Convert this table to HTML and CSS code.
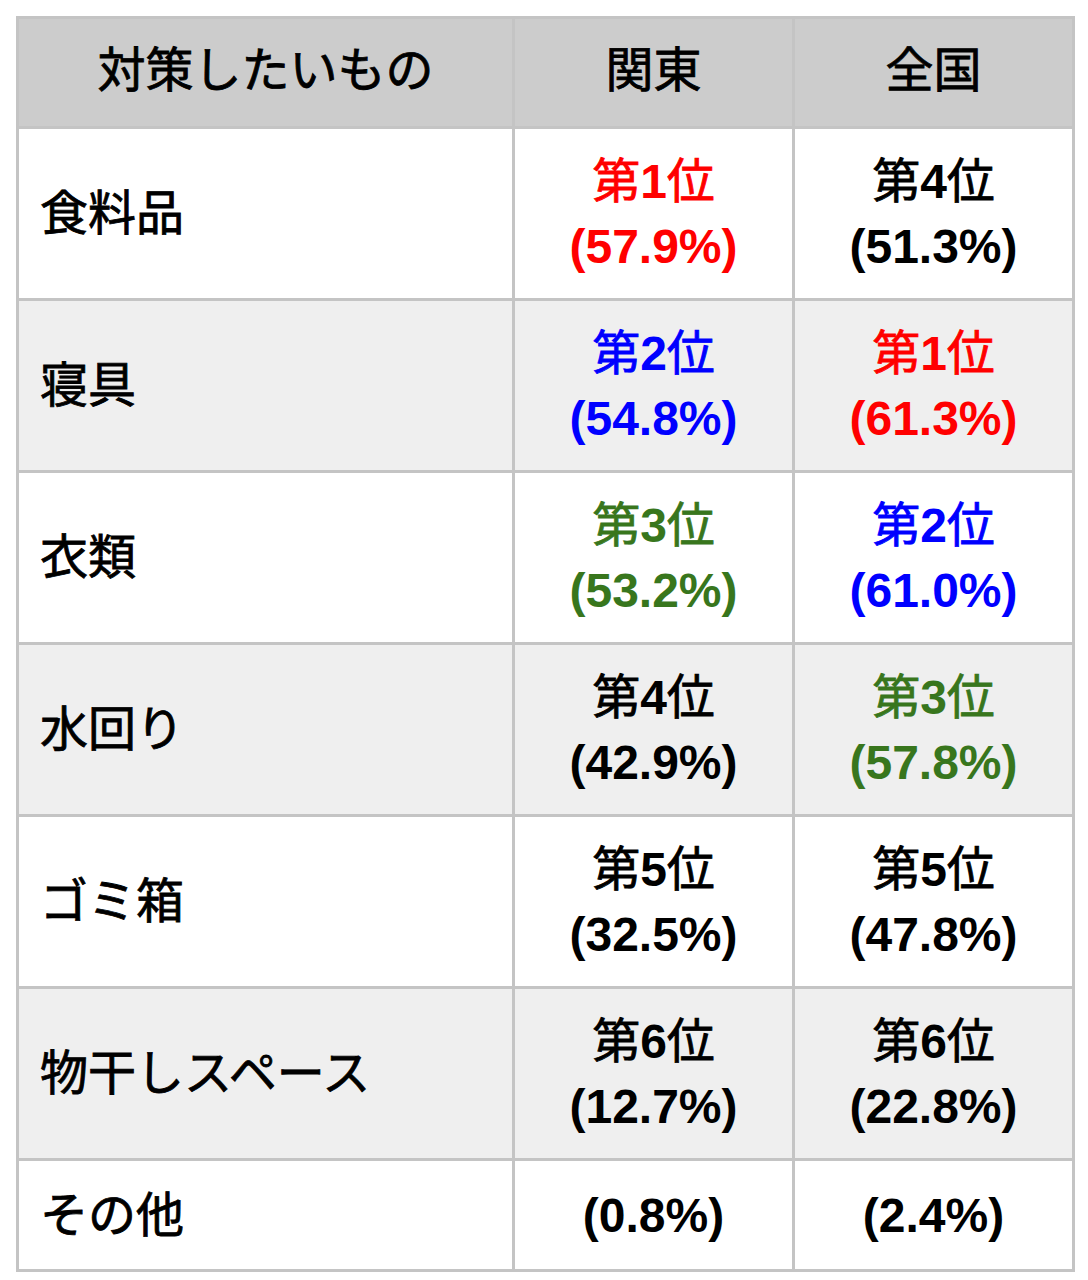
FILE: index.html
```html
<!DOCTYPE html>
<html lang="ja">
<head>
<meta charset="utf-8">
<link rel="stylesheet" href="styles.css">
</head>
<body>
<table class="rank">
  <colgroup><col class="c1"><col class="c2"><col class="c3"></colgroup>
  <thead>
    <tr class="head"><th>対策したいもの</th><th>関東</th><th>全国</th></tr>
  </thead>
  <tbody>
    <tr><td class="item">食料品</td><td class="red">第<b>1</b>位<br><b>(57.9%)</b></td><td>第<b>4</b>位<br><b>(51.3%)</b></td></tr>
    <tr class="alt"><td class="item">寝具</td><td class="blue">第<b>2</b>位<br><b>(54.8%)</b></td><td class="red">第<b>1</b>位<br><b>(61.3%)</b></td></tr>
    <tr><td class="item">衣類</td><td class="green">第<b>3</b>位<br><b>(53.2%)</b></td><td class="blue">第<b>2</b>位<br><b>(61.0%)</b></td></tr>
    <tr class="alt"><td class="item">水回り</td><td>第<b>4</b>位<br><b>(42.9%)</b></td><td class="green">第<b>3</b>位<br><b>(57.8%)</b></td></tr>
    <tr><td class="item">ゴミ箱</td><td>第<b>5</b>位<br><b>(32.5%)</b></td><td>第<b>5</b>位<br><b>(47.8%)</b></td></tr>
    <tr class="alt"><td class="item">物干しスペース</td><td>第<b>6</b>位<br><b>(12.7%)</b></td><td>第<b>6</b>位<br><b>(22.8%)</b></td></tr>
    <tr class="last"><td class="item">その他</td><td><b>(0.8%)</b></td><td><b>(2.4%)</b></td></tr>
  </tbody>
</table>
</body>
</html>
```

FILE: styles.css
```css
html, body {
  margin: 0;
  padding: 0;
  background: #ffffff;
}
body {
  padding: 16px 0 0 16px;
  font-family: "Liberation Sans", "Noto Sans CJK JP", sans-serif;
  color: #000;
}
.rank {
  border-collapse: separate;
  border-spacing: 0;
  border-top: 3px solid #c4c4c4;
  border-left: 3px solid #c4c4c4;
  table-layout: fixed;
  width: 1059px;
}
.c1 { width: 496px; }
.c2 { width: 280px; }
.c3 { width: 280px; }
.rank th, .rank td {
  border-right: 3px solid #c4c4c4;
  border-bottom: 3px solid #c4c4c4;
  padding: 0;
  font-size: 48px;
  line-height: 65px;
  font-weight: 400;
  -webkit-text-stroke: 0.8px currentColor;
  text-align: center;
  vertical-align: middle;
}
.rank b {
  font-weight: bold;
  -webkit-text-stroke: 0;
}
.rank th {
  background: #cccccc;
  height: 103px;
  padding-bottom: 4px;
}
.rank td { height: 169px; }
.rank tr.last td { height: 108px; }
.rank tr.alt td { background: #efefef; }
.rank td.item {
  text-align: left;
  padding-left: 21px;
}
.red { color: #ff0000; }
.blue { color: #0000ff; }
.green { color: #38761d; }
```
